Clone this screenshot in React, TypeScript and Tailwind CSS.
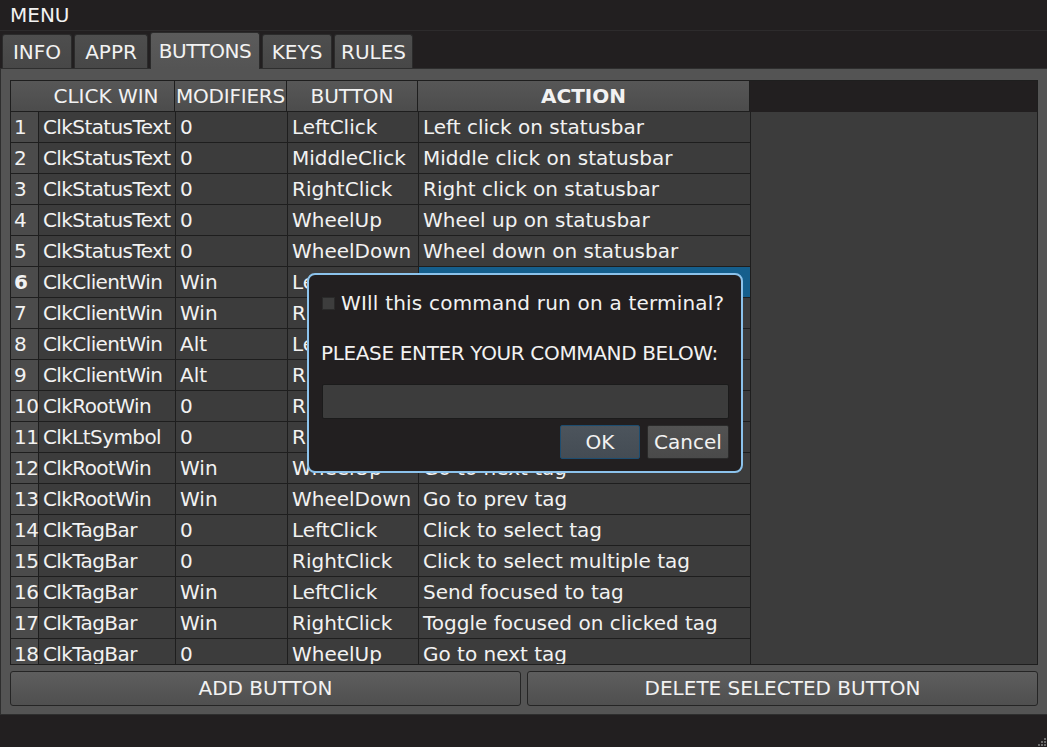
import React from "react";

type Row = [string, string, string, string];

const rows: Row[] = [
  ["ClkStatusText", "0", "LeftClick", "Left click on statusbar"],
  ["ClkStatusText", "0", "MiddleClick", "Middle click on statusbar"],
  ["ClkStatusText", "0", "RightClick", "Right click on statusbar"],
  ["ClkStatusText", "0", "WheelUp", "Wheel up on statusbar"],
  ["ClkStatusText", "0", "WheelDown", "Wheel down on statusbar"],
  ["ClkClientWin", "Win", "LeftClick", ""],
  ["ClkClientWin", "Win", "RightClick", "Resize window"],
  ["ClkClientWin", "Alt", "LeftClick", "Move window"],
  ["ClkClientWin", "Alt", "RightClick", "Resize window"],
  ["ClkRootWin", "0", "RightClick", "Open menu"],
  ["ClkLtSymbol", "0", "RightClick", "Change layout"],
  ["ClkRootWin", "Win", "WheelUp", "Go to next tag"],
  ["ClkRootWin", "Win", "WheelDown", "Go to prev tag"],
  ["ClkTagBar", "0", "LeftClick", "Click to select tag"],
  ["ClkTagBar", "0", "RightClick", "Click to select multiple tag"],
  ["ClkTagBar", "Win", "LeftClick", "Send focused to tag"],
  ["ClkTagBar", "Win", "RightClick", "Toggle focused on clicked tag"],
  ["ClkTagBar", "0", "WheelUp", "Go to next tag"],
];

const tabs = [
  { label: "INFO", w: "w-[70px]" },
  { label: "APPR", w: "w-[74px]" },
  { label: "BUTTONS", w: "w-[110px]", active: true },
  { label: "KEYS", w: "w-[70px]" },
  { label: "RULES", w: "w-[79px]" },
];

const cell = "h-[30px] leading-[30px] whitespace-nowrap overflow-hidden border-r border-b border-[#1e1e1e] box-content";
const head = "bg-gradient-to-b from-[#575757] to-[#4c4c4c] text-center";

export default function App() {
  const selected = 5;

  return (
    <div className="relative w-[1047px] h-[747px] overflow-hidden bg-[#221f20] text-[20px] text-[#f2f2f2] font-['DejaVu_Sans',sans-serif]">
      {/* title bar */}
      <div className="h-[31px] border-b border-[#2d2b2c] pl-[10px] leading-[30px]">MENU</div>

      {/* tabs */}
      <div className="h-[37px] flex items-end gap-[2px] pl-[2px]">
        {tabs.map((t) =>
          t.active ? (
            <div
              key={t.label}
              className={`${t.w} h-[37px] -mb-px relative z-10 rounded-t-[3px] border border-b-0 border-[#2b2b2b] bg-gradient-to-b from-[#5b5b5b] to-[#545454] text-center leading-[36px] tracking-[-0.5px]`}
            >
              {t.label}
            </div>
          ) : (
            <div
              key={t.label}
              className={`${t.w} h-[34px] rounded-t-[3px] border border-b-0 border-[#2b2b2b] bg-gradient-to-b from-[#4e4e4e] to-[#474747] text-center leading-[34px]`}
            >
              {t.label}
            </div>
          )
        )}
      </div>

      {/* panel */}
      <div className="h-[647px] bg-[#545454] border-t border-l border-b border-[#2e2e2e] pl-[9px] pr-[9px] pt-[11px] flex flex-col">
        <div className="h-[585px] border border-[#1e1e1e] overflow-hidden bg-[#3c3c3c]">
          {/* header */}
          <div className="flex">
            <div className={`w-[27px] h-[30px] border-b border-[#1e1e1e] box-content ${head}`} />
            <div className={`${cell} w-[136px] ${head}`}>CLICK WIN</div>
            <div className={`${cell} w-[111px] ${head} tracking-[-0.2px]`}>MODIFIERS</div>
            <div className={`${cell} w-[130px] ${head}`}>BUTTON</div>
            <div className={`${cell} w-[331px] ${head} font-bold`}>ACTION</div>
            <div className="flex-1 h-[31px] bg-[#221f20]" />
          </div>
          {/* body */}
          {rows.map((r, i) => (
            <div key={i} className="flex">
              <div
                className={`w-[24px] h-[30px] leading-[30px] pl-[3px] border-r border-b border-[#1e1e1e] box-content bg-[#4b4b4b] whitespace-nowrap tracking-[-0.5px] ${
                  i === selected ? "font-bold" : ""
                }`}
              >
                {i + 1}
              </div>
              <div className={`${cell} w-[132px] pl-[4px] tracking-[-0.6px]`}>{r[0]}</div>
              <div className={`${cell} w-[107px] pl-[4px]`}>{r[1]}</div>
              <div className={`${cell} w-[126px] pl-[4px]`}>{r[2]}</div>
              <div className={`${cell} w-[327px] pl-[4px] ${i === selected ? "bg-[#155f8d]" : ""}`}>{r[3]}</div>
              <div className="flex-1" />
            </div>
          ))}
        </div>

        <div className="mt-[6px] flex gap-[6px]">
          <button className="flex-1 h-[35px] rounded-[3px] border border-[#252525] bg-gradient-to-b from-[#5e5e5e] to-[#4f4f4f] text-[20px] leading-[33px] text-[#f2f2f2]">
            ADD BUTTON
          </button>
          <button className="flex-1 h-[35px] rounded-[3px] border border-[#252525] bg-gradient-to-b from-[#5e5e5e] to-[#4f4f4f] text-[20px] leading-[33px] text-[#f2f2f2]">
            DELETE SELECTED BUTTON
          </button>
        </div>
      </div>

      {/* resize grip */}
      <svg className="absolute right-0 bottom-0" width="10" height="10" viewBox="0 0 10 10">
        <rect x="7" y="1" width="2" height="2" fill="#6a6a6a" />
        <rect x="4" y="4" width="2" height="2" fill="#6a6a6a" />
        <rect x="7" y="4" width="2" height="2" fill="#6a6a6a" />
        <rect x="1" y="7" width="2" height="2" fill="#6a6a6a" />
        <rect x="4" y="7" width="2" height="2" fill="#6a6a6a" />
        <rect x="7" y="7" width="2" height="2" fill="#6a6a6a" />
      </svg>

      {/* dialog */}
      <div className="absolute left-[307px] top-[273px] w-[436px] h-[200px] rounded-[8px] border-2 border-[#8cc3ec] bg-[#221f20] px-[12px] pt-[16px] pb-[12px] flex flex-col">
        <div className="flex items-center h-[24px] pl-[1px]">
          <span className="w-[13px] h-[13px] border border-[#2a2a2a] bg-[#3d3d3d] mr-[6px]" />
          <span className="leading-[24px] whitespace-nowrap tracking-[0.2px]">WIll this command run on a terminal?</span>
        </div>
        <div className="mt-[26px] h-[24px] leading-[24px] whitespace-nowrap tracking-[-0.35px]">PLEASE ENTER YOUR COMMAND BELOW:</div>
        <div className="mt-[19px] ml-[1px] h-[35px] rounded-[2px] border border-[#1b1b1b] bg-[#3c3c3c]" />
        <div className="mt-[6px] flex justify-end gap-[7px]">
          <button className="w-[80px] h-[34px] rounded-[2px] border border-[#1d4d70] bg-gradient-to-b from-[#4c545c] to-[#444c54] text-[20px] leading-[32px] text-[#f2f2f2]">
            OK
          </button>
          <button className="w-[82px] h-[34px] rounded-[2px] border border-[#2a2a2a] bg-gradient-to-b from-[#525252] to-[#4a4a4a] text-[20px] leading-[32px] text-[#f2f2f2]">
            Cancel
          </button>
        </div>
      </div>
    </div>
  );
}
